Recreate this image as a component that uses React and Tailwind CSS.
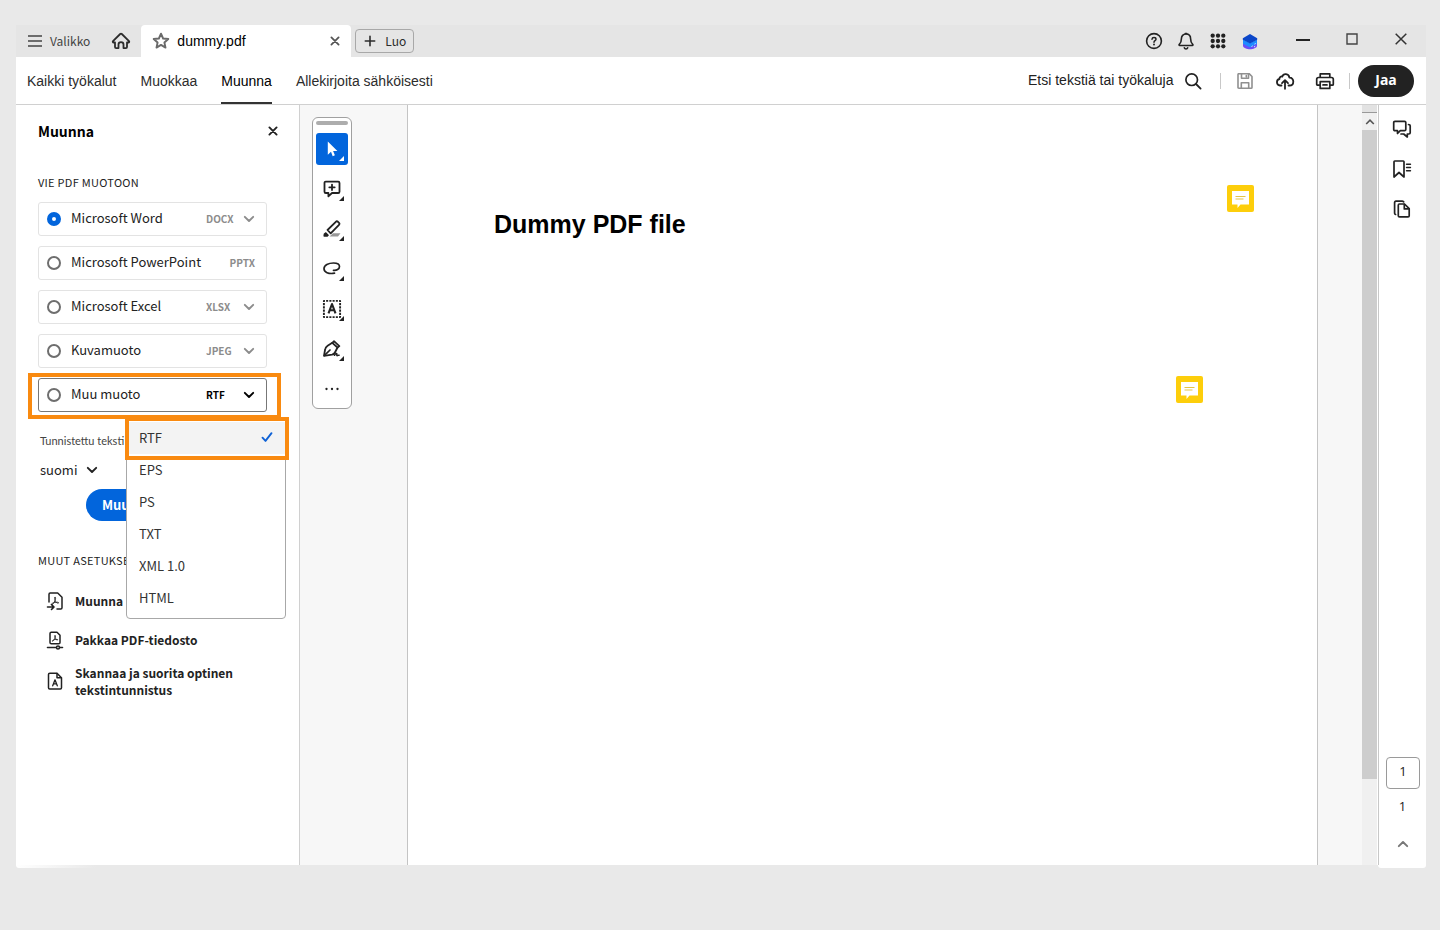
import React from "react";

function Icon({ className = "size-5", box = 20, children }) {
  return (
    <svg
      viewBox={`0 0 ${box} ${box}`}
      className={`shrink-0 ${className}`}
      fill="none"
      stroke="currentColor"
      strokeWidth="1.6"
      strokeLinecap="round"
      strokeLinejoin="round"
      aria-hidden="true"
    >
      {children}
    </svg>
  );
}

const Chevron = ({ className }) => (
  <Icon box={12} className={className}>
    <path d="M1.8 3.8 6 8l4.2-4.2" strokeWidth="1.9" />
  </Icon>
);

function IconButton({ label, className = "", children }) {
  return (
    <button type="button" aria-label={label} className={`flex items-center justify-center ${className}`}>
      {children}
    </button>
  );
}

function TitleBar() {
  return (
    <header className="flex h-8 items-stretch bg-[#e5e5e5] text-[#2c2c2c]">
      <button type="button" className="flex items-center gap-2 pl-3 text-[12px] leading-4 text-[#444]">
        <svg viewBox="0 0 14 12" className="h-3 w-[14px]" stroke="currentColor" strokeWidth="1.6" aria-hidden="true">
          <path d="M0 1h14M0 6h14M0 11h14" />
        </svg>
        Valikko
      </button>
      <IconButton label="Koti" className="ml-5 w-[22px]">
        <Icon>
          <path d="M2 10.2 9.2 3a1.2 1.2 0 0 1 1.6 0L18 10.2c.6.7.1 1.3-.6 1.3H16V16c0 .7-.4 1.1-1.1 1.1h-2.4v-3.6c0-1.5-1-2.4-2.5-2.4s-2.5.9-2.5 2.4v3.6H5.1C4.4 17.1 4 16.7 4 16v-4.5H2.6c-.7 0-1.2-.6-.6-1.3Z" strokeWidth="1.8" />
        </Icon>
      </IconButton>
      <div className="ml-[9px] flex w-[210px] items-center rounded-t bg-white px-[10px] text-black">
        <Icon className="size-5 text-[#6a6a6a]">
          <path d="m10 2.7 2.1 4.8 5.2.5-3.9 3.500 1.100 5.100-4.500-2.700-4.500 2.700 1.100-5.100L2.700 8l5.200-.5Z" strokeWidth="1.9" />
        </Icon>
        <span className="ml-[6px] flex-1 font-['Liberation_Sans',sans-serif] text-[14px] leading-5">dummy.pdf</span>
        <IconButton label="Sulje välilehti" className="size-3 text-[#555]">
          <Icon box={12} className="size-3">
            <path d="m2.4 2.4 7.200 7.200m0-7.200L2.400 9.600" strokeWidth="1.8" />
          </Icon>
        </IconButton>
      </div>
      <button type="button" className="ml-1 flex h-6 items-center gap-2 self-center rounded border border-[#a8a8a8] px-[7px] text-[12px] leading-4">
        <Icon box={14} className="size-[14px]">
          <path d="M7 2.300v9.400M2.300 7h9.400" />
        </Icon>
        Luo
      </button>

      <div className="ml-auto flex items-center text-[#222]">
        <IconButton label="Ohje" className="w-8">
          <Icon>
            <circle cx="10" cy="10" r="7.400" />
            <path d="M8 8.300c.1-1.200.9-1.800 2-1.800s2 .7 2 1.700c0 1.500-2 1.500-2 3" strokeWidth="1.5" />
            <circle cx="10" cy="13.500" r=".95" fill="currentColor" stroke="none" />
          </Icon>
        </IconButton>
        <IconButton label="Ilmoitukset" className="w-8">
          <Icon>
            <path d="M10 3c-2.900 0-4.600 2-4.600 4.700 0 3-.6 4.300-2.100 5.600-.5.500-.3 1.200.4 1.200h12.600c.7 0 .9-.7.4-1.200-1.500-1.300-2.100-2.600-2.100-5.600C14.600 5 12.900 3 10 3Z" />
            <path d="M8.300 16.800a1.800 1.800 0 0 0 3.400 0M9.300 2.500h1.400" />
          </Icon>
        </IconButton>
        <IconButton label="Sovellukset" className="w-8">
          <Icon>
            <g fill="currentColor" stroke="none">
              {[4.7, 10, 15.3].map((y) => [4.7, 10, 15.3].map((x) => <circle key={`${x}-${y}`} cx={x} cy={y} r="2.15" />))}
            </g>
          </Icon>
        </IconButton>
        <IconButton label="Tili" className="w-8">
          <svg viewBox="0 0 20 20" className="size-5" aria-hidden="true">
            <path d="m3 12 7 3.500 7-3.500v3c0 1.500-4 3.300-7 3.300s-7-1.800-7-3.300Z" fill="#6c4df6" />
            <path d="m3 8.500 7 3.500 7-3.500v4.300l-7 3.700-7-3.700Z" fill="#1e8bff" />
            <path d="m10 3 7.200 4.200v1.600L10 12.500 2.800 8.800V7.200Z" fill="#0b46c9" />
            <path d="m11.500 15.500 1.200-.6m1.300 1 1.200-.6m-.7-2.200 1.200-.6" stroke="#c9efff" />
          </svg>
        </IconButton>
        <IconButton label="Pienennä" className="ml-[21px] size-8">
          <svg viewBox="0 0 14 14" className="size-[14px]" aria-hidden="true">
            <path d="M0 6h14" stroke="currentColor" strokeWidth="2" />
          </svg>
        </IconButton>
        <IconButton label="Suurenna" className="ml-[17px] size-8 pb-1 text-[#444]">
          <svg viewBox="0 0 12 12" className="size-3" fill="none" stroke="currentColor" aria-hidden="true">
            <path d="M1 1h10v10H1Z" strokeWidth="1.4" />
          </svg>
        </IconButton>
        <IconButton label="Sulje" className="mr-[9px] ml-[17px] size-8 pb-1 text-[#333]">
          <svg viewBox="0 0 12 12" className="size-3" fill="none" stroke="currentColor" aria-hidden="true">
            <path d="m.7.7 10.600 10.600m0-10.600L.7 11.300" strokeWidth="1.5" />
          </svg>
        </IconButton>
      </div>
    </header>
  );
}

const tabs = ["Kaikki työkalut", "Muokkaa", "Muunna", "Allekirjoita sähköisesti"];

function Toolbar() {
  return (
    <div className="flex h-12 items-stretch border-b border-[#d0d0d0] font-['Liberation_Sans',sans-serif] text-[14px] leading-5 text-[#2c2c2c]">
      <nav className="flex gap-6 pl-[11px]">
        {tabs.map((tab) => (
          <a
            key={tab}
            href="#"
            aria-current={tab === "Muunna" ? "page" : undefined}
            className={`flex items-center border-b-2 pt-[2px] ${tab === "Muunna" ? "border-[#333] text-black" : "border-transparent"}`}
          >
            {tab}
          </a>
        ))}
      </nav>
      <div className="ml-auto flex items-center text-[#222]">
        <label className="flex items-center">
          <input
            type="text"
            aria-label="Etsi tekstiä tai työkaluja"
            placeholder="Etsi tekstiä tai työkaluja"
            className="w-[155px] pb-[2px] text-[14px] leading-5 outline-none placeholder:text-[#222]"
          />
          <Icon className="size-5">
            <circle cx="8.700" cy="8.700" r="5.800" strokeWidth="1.7" />
            <path d="m13 13 4.600 4.600" strokeWidth="1.8" />
          </Icon>
        </label>
        <span className="ml-[17px] h-4 w-px bg-[#c8c8c8]" />
        <IconButton label="Tallenna" className="ml-[14px] size-5 text-[#909090]">
          <Icon>
            <path d="M3.200 2.700h10.900l2.900 2.800v10.900c0 .5-.4.900-.9.900H3.900a.9.900 0 0 1-.9-.9V3.500c0-.5 0-.8.200-.8Z" />
            <path d="M6.500 3v4.300h7V3M6.300 17v-5.200h7.400V17M11.300 4.500v1.300" />
          </Icon>
        </IconButton>
        <IconButton label="Lataa pilveen" className="ml-5 size-5">
          <Icon>
            <path d="M6.500 14.500H5a3.300 3.300 0 0 1-.5-6.500C4.200 6.300 6 5 7.300 5.600 8.300 2.200 13.800 2.200 14.400 6.700c2.600-.1 3.900 1.700 3.900 3.700 0 2.300-1.500 4.100-3.800 4.100h-1" strokeWidth="1.8" />
            <path d="M10 17.800V9.500m-3 2.700 3-3 3 3" strokeWidth="1.8" />
          </Icon>
        </IconButton>
        <IconButton label="Tulosta" className="ml-5 size-5">
          <Icon>
            <path d="M5.200 6V2.800h9.600V6M5 14.200H2.700a1 1 0 0 1-1-1V8.300A1.800 1.800 0 0 1 3.500 6.500h13a1.800 1.800 0 0 1 1.800 1.800v4.900a1 1 0 0 1-1 1H15" strokeWidth="1.7" />
            <path d="M5.200 10.700h9.600v6.700H5.200Zm2.800 3.200h4" strokeWidth="1.7" />
          </Icon>
        </IconButton>
        <span className="ml-[14px] h-4 w-px bg-[#c8c8c8]" />
        <button
          type="button"
          className="mr-3 ml-2 h-8 w-14 rounded-full bg-[#222] pb-[2px] font-['Noto_Sans',sans-serif] text-[14px] font-bold text-white"
        >
          Jaa
        </button>
      </div>
    </div>
  );
}

const formats = [
  { id: "word", name: "Microsoft Word", tag: "DOCX", menu: true },
  { id: "ppt", name: "Microsoft PowerPoint", tag: "PPTX", menu: false },
  { id: "excel", name: "Microsoft Excel", tag: "XLSX", menu: true },
  { id: "image", name: "Kuvamuoto", tag: "JPEG", menu: true },
];

const radioBase = "size-[14px] shrink-0 appearance-none rounded-full bg-white outline-none";
const otherFormats = ["RTF", "EPS", "PS", "TXT", "XML 1.0", "HTML"];

function FormatRow({ format }) {
  const { id, name, tag, menu } = format;
  return (
    <li className="flex h-[34px] items-center rounded-[3px] border border-[#e3e3e3] pr-[11px] pl-2">
      <input
        type="radio"
        name="format"
        id={id}
        defaultChecked={id === "word"}
        className={`${radioBase} border-2 border-[#6e6e6e] checked:border-[5px] checked:border-[#0265dc]`}
      />
      <label htmlFor={id} className="flex-1 pb-[3px] pl-[10px]">
        {name}
      </label>
      {menu ? (
        <span className="relative flex text-[#8c8c8c]">
          <select
            aria-label={`${name}, tiedostomuoto`}
            className="w-[49px] appearance-none bg-transparent text-[10px] leading-4 font-bold outline-none"
          >
            <option>{tag}</option>
          </select>
          <Chevron className="pointer-events-none absolute top-[2px] right-0 size-3" />
        </span>
      ) : (
        <span className="text-[10px] leading-4 font-bold text-[#8c8c8c]">{tag}</span>
      )}
    </li>
  );
}

function OtherFormatRow() {
  return (
    <li className="relative flex h-[34px] items-center rounded-[3px] border border-[#777] pr-[11px] pl-2">
      <input type="radio" name="format" id="other" className={`${radioBase} border-2 border-[#6e6e6e] checked:border-[5px] checked:border-[#0265dc]`} />
      <label htmlFor="other" className="flex-1 pb-[3px] pl-[10px]">
        Muu muoto
      </label>
      <button
        type="button"
        aria-haspopup="listbox"
        aria-expanded="true"
        className="flex w-[49px] items-center justify-between text-[10px] leading-4 font-bold text-black"
      >
        RTF
        <Chevron className="size-3" />
      </button>
      <span className="pointer-events-none absolute -top-[6px] -right-[15px] -bottom-2 -left-[11px] border-4 border-[#f98a10]" />
      <ul
        role="listbox"
        aria-label="Muu muoto"
        className="absolute top-[38px] left-[87px] z-10 w-40 rounded border border-[#a8a8a8] bg-white py-1 text-[#333]"
      >
        {otherFormats.map((name, i) => (
          <li
            key={name}
            role="option"
            aria-selected={i === 0}
            className={`flex h-8 items-center justify-between px-3 pb-[2px] ${i === 0 ? "bg-[#f3f3f3]" : ""}`}
          >
            {name}
            {i === 0 && (
              <Icon box={12} className="size-3 text-[#0f62d6]">
                <path d="m1.500 6.700 3 3.200 6-7.700" strokeWidth="1.9" />
              </Icon>
            )}
          </li>
        ))}
        <li role="presentation" className="pointer-events-none absolute -top-px -right-1 -left-[2px] h-[43px] border-4 border-[#f98a10]" />
      </ul>
    </li>
  );
}

const pdfMark = "M10 6.500c.9 0 .7 1.500 0 3.100-.8 1.900-2.200 4-3.200 4.200-1 0-.3-1.300 1.500-1.900 1.800-.7 4.400-1 5.200-.3.500.8-1.100.8-2.300-.3-1.300-1.200-2.200-4.700-1.200-4.800Z";

const actions = [
  {
    label: "Muunna",
    icon: (
      <>
        <path d="M4 11V3.200c0-.8.500-1.200 1.200-1.200h7.500L17 6.300v10.500c0 .7-.5 1.200-1.200 1.200H12" strokeWidth="1.5" />
        <path d={pdfMark} strokeWidth=".9" />
        <path d="M2.500 16h6.300M6.500 13.500 9 16l-2.500 2.500" />
      </>
    ),
  },
  {
    label: "Pakkaa PDF-tiedosto",
    icon: (
      <>
        <path d="M5 12.500v-9c0-.8.500-1.300 1.300-1.300h5.700L15 5.200v7.300c0 .8-.5 1.300-1.300 1.300H6.300c-.8 0-1.300-.5-1.300-1.300Z" strokeWidth="1.5" />
        <g transform="translate(2.400 .8) scale(.76)">
          <path d={pdfMark} strokeWidth="1.1" />
        </g>
        <path d="M2.500 17.500h8.800m3.400 0h2.800" />
        <circle cx="13" cy="17.500" r="1.500" />
      </>
    ),
  },
  {
    label: "Skannaa ja suorita optinen tekstintunnistus",
    icon: (
      <>
        <path d="M3.500 16.800V3.500c0-.8.500-1.300 1.300-1.300h7.200l4.500 4.500v10.100c0 .7-.5 1.200-1.200 1.200H4.700c-.7 0-1.200-.5-1.200-1.200Z" strokeWidth="1.5" />
        <path d="M12 2.500v4.200h4.200" strokeWidth="1.5" />
        <path d="m7.700 14.800 2.300-6 2.300 6m-3.900-2h3.200" strokeWidth="1.3" />
      </>
    ),
  },
];

function Sidebar() {
  return (
    <aside className="w-[284px] shrink-0 border-r border-[#d0d0d0] pt-4 pr-8 pl-[22px] text-[13px] leading-[17px] text-[#222]">
      <div className="flex h-5 items-center justify-between">
        <h2 className="text-[14px] font-bold text-black">Muunna</h2>
        <IconButton label="Sulje paneeli" className="-mr-3 size-3">
          <Icon box={12} className="size-3">
            <path d="m2.400 2.400 7.200 7.200m0-7.200L2.400 9.600" strokeWidth="1.9" />
          </Icon>
        </IconButton>
      </div>
      <h3 className="mt-[33px] text-[11px] leading-4 tracking-wide">VIE PDF MUOTOON</h3>
      <ul className="mt-3 flex flex-col gap-[10px]">
        {formats.map((format) => (
          <FormatRow key={format.id} format={format} />
        ))}
        <OtherFormatRow />
      </ul>
      <label htmlFor="language" className="mt-[21px] ml-[2px] block font-['Lato',sans-serif] text-[11px] leading-4 text-[#444]">
        Tunnistettu teksti
      </label>
      <div className="relative mt-3 ml-[2px] flex w-[58px]">
        <select id="language" className="w-full appearance-none bg-transparent leading-[17px] outline-none">
          <option>suomi</option>
        </select>
        <Chevron className="pointer-events-none absolute top-[3px] right-0 size-3" />
      </div>
      <button type="button" className="mt-[11px] ml-12 h-8 w-[132px] rounded-full bg-[#0265dc] pb-[2px] pl-4 text-left font-bold text-white">
        Muunna
      </button>
      <h3 className="mt-[31px] text-[11px] leading-4 tracking-wide">MUUT ASETUKSET</h3>
      <ul className="mt-[13px] text-[12px] font-bold">
        {actions.map(({ label, icon }) => (
          <li key={label}>
            <a href="#" className="flex min-h-[39px] items-center gap-[10px] py-[5px] pl-[7px]">
              <Icon>{icon}</Icon>
              <span>{label}</span>
            </a>
          </li>
        ))}
      </ul>
    </aside>
  );
}

const tools = [
  {
    label: "Kommentti",
    icon: (
      <>
        <path d="M3.800 2.600h12.400c.8 0 1.300.5 1.300 1.300v8.800c0 .8-.5 1.300-1.300 1.300H10l-3.600 3.300V14H3.800c-.8 0-1.300-.5-1.300-1.300V3.900c0-.8.500-1.300 1.300-1.300Z" strokeWidth="1.8" />
        <path d="M10 5.600v5.400M7.300 8.300h5.400" strokeWidth="1.8" />
      </>
    ),
  },
  {
    label: "Korostus",
    icon: (
      <>
        <path d="m7.500 17.500 3.500-3.300h7.500l-2.500 3.300Z" fill="#999" stroke="none" />
        <path d="m5.500 11 8.300-8.200c.7-.7 1.500-.6 2.200 0l1 1c.7.700.700 1.400 0 2.100l-8.300 8.500Z" strokeWidth="1.8" />
        <path d="M3.800 14 6 16.200l-.8.800H2.200c-.2-1.300.4-2.400 1.600-3Z" fill="currentColor" />
      </>
    ),
  },
  {
    label: "Piirrä",
    icon: <path d="M11.500 11.300c3 .3 6-1 6-3.800C17.500 5 15 4 11.500 4 6.500 4 2 6.300 2 9.800c0 3.500 4.500 5.400 10.500 4.400" strokeWidth="1.7" />,
  },
  {
    label: "Lisää teksti",
    icon: (
      <>
        <path d="M1.900 1.900h16.200v16.200H1.900Z" strokeWidth="1.900" strokeDasharray="2.050 1.190" strokeDashoffset="1.020" strokeLinecap="butt" />
        <path d="m6.500 14.300 3.500-9.300 3.500 9.300m-5.700-3.100h4.400" strokeWidth="2.100" strokeLinecap="butt" />
      </>
    ),
  },
  {
    label: "Allekirjoita",
    icon: (
      <>
        <path d="m2 16.800 1-5.800c.3-2.200 1-3.300 2.600-4.300l4.700-2.900 5.200 4.700-2.300 4.500c-.7 1.500-1.500 2.300-3.200 2.700Z" strokeWidth="1.8" />
        <path d="m10.300 3.800 1.700-1.600 5.400 4.900-1.900 1.500M2.500 16.300 8 11" strokeWidth="1.7" />
        <path d="M12.500 16.300c1-1.800 2-2.300 2.300-1.500.2.700-.5 1.700.3 1.900.8 0 1-.6 2-.5" strokeWidth="1.5" />
      </>
    ),
  },
];

function Corner({ className }) {
  return (
    <svg viewBox="0 0 5 5" className={`absolute size-[5px] ${className}`} aria-hidden="true">
      <path d="M5 0v5H0Z" fill="currentColor" />
    </svg>
  );
}

function ToolPalette() {
  return (
    <div
      role="toolbar"
      aria-label="Työkalut"
      className="mt-3 ml-3 flex w-10 shrink-0 flex-col items-center self-start rounded-md border border-[#a0a0a0] bg-white py-[3px] text-[#222]"
    >
      <span className="mb-2 h-1 w-8 rounded-full bg-[#adadad]" />
      <IconButton label="Valitse" className="relative mb-1 size-8 rounded-[3px] bg-[#0265dc] text-white">
        <Icon className="size-5">
          <path d="M5.800 2.500v13.300l3.200-3 1.700 4.400 2.200-.9-1.800-4.200 4.300-.2Z" fill="currentColor" stroke="none" />
        </Icon>
        <Corner className="right-1 bottom-1" />
      </IconButton>
      {tools.map(({ label, icon }) => (
        <IconButton key={label} label={label} className="relative mb-1 h-9 w-8 pt-1">
          <Icon>{icon}</Icon>
          <Corner className="right-1 bottom-1" />
        </IconButton>
      ))}
      <IconButton label="Lisää työkaluja" className="h-9 w-8 pt-[3px]">
        <Icon>
          <g fill="currentColor" stroke="none">
            <circle cx="4.500" cy="10" r="1.150" />
            <circle cx="10" cy="10" r="1.150" />
            <circle cx="15.500" cy="10" r="1.150" />
          </g>
        </Icon>
      </IconButton>
    </div>
  );
}

function Note({ className }) {
  return (
    <button type="button" aria-label="Muistilappu" className={`absolute ${className}`}>
      <svg viewBox="0 0 27 27" className="size-[27px]" aria-hidden="true">
        <rect width="27" height="27" rx="2" fill="#fdce0b" />
        <path d="M5 6h17v13.500h-8.500L10.500 23v-3.500H5Z" fill="#fff" />
        <path d="M8.500 11.500h10M8.500 14h8" stroke="#e5c545" strokeWidth="1.2" />
      </svg>
    </button>
  );
}

function DocumentArea() {
  return (
    <main className="flex min-w-0 flex-1 bg-[#f7f7f7]">
      <ToolPalette />
      <article className="relative mr-11 ml-[55px] flex-1 border-x border-[#c4c4c4] bg-white pt-[103px] pl-[86px]">
        <h1 className="font-['Liberation_Sans',sans-serif] text-[25px] leading-8 font-bold text-black">Dummy PDF file</h1>
        <Note className="top-20 right-[63px]" />
        <Note className="top-[271px] right-[114px]" />
      </article>
      <div className="flex w-[15px] shrink-0 flex-col bg-[#f0f0f0]">
        <span className="h-2 border-b border-[#999] bg-[#e2e2e2]" />
        <IconButton label="Vieritä ylös" className="h-[17px] text-[#555]">
          <Icon box={10} className="size-[10px]">
            <path d="m1.200 7 3.800-3.800L8.800 7" strokeLinecap="butt" strokeLinejoin="miter" />
          </Icon>
        </IconButton>
        <span className="flex-[649] bg-[#cdcdcd]" />
        <span className="flex-[86]" />
      </div>
    </main>
  );
}

function Rail() {
  return (
    <aside className="ml-px flex w-12 shrink-0 flex-col items-center border-l border-[#c8c8c8] pt-[14px] font-['Open_Sans',sans-serif] text-[13px] leading-4 text-[#222]">
      <div className="mr-[2px] flex flex-col gap-5">
        <IconButton label="Kommentit">
          <Icon>
            <path d="M3 2.300h9.500c.8 0 1.300.5 1.300 1.300v6.800c0 .8-.5 1.300-1.300 1.300H8.300L5.500 14.500v-2.800H3c-.8 0-1.300-.5-1.300-1.300V3.600c0-.8.500-1.300 1.300-1.300Z" strokeWidth="1.7" />
            <path d="M16.500 5.500c1 0 1.700.5 1.700 1.300v7c0 .8-.5 1.200-1.300 1.200h-1.600v3l-3.600-3H9" strokeWidth="1.7" />
          </Icon>
        </IconButton>
        <IconButton label="Kirjanmerkit">
          <Icon>
            <path d="M2.800 2h8.400c.6 0 .8.300.8.800v15.200l-5-4.500L2 18V2.800c0-.5.200-.8.800-.8Z" strokeWidth="1.7" />
            <path d="M14.500 5.300h4M14.500 8.500h4M14.500 11.700h4" strokeWidth="1.4" />
          </Icon>
        </IconButton>
        <IconButton label="Sivut">
          <Icon>
            <path d="M7.300 5h5.200l4.700 4.700v7c0 .7-.5 1.200-1.200 1.200H7.500c-.7 0-1.200-.5-1.200-1.200V6.200C6.300 5.500 6.700 5 7.300 5Z" strokeWidth="1.7" />
            <path d="M12.300 5.300v4.600h4.600M3.600 15.500c-.7-.2-1-.6-1-1.300V3.500c0-.8.500-1.300 1.300-1.300h6.300c.7 0 1 .2 1.500.7" strokeWidth="1.7" />
          </Icon>
        </IconButton>
      </div>
      <input
        aria-label="Sivunumero"
        defaultValue="1"
        className="mt-auto ml-px h-8 w-[34px] rounded border border-[#9a9a9a] pb-1 text-center outline-none"
      />
      <span className="mt-[9px]">1</span>
      <IconButton label="Edellinen sivu" className="mt-6 mb-[15px] text-[#777]">
        <Chevron className="size-3 rotate-180" />
      </IconButton>
    </aside>
  );
}

export default function App() {
  return (
    <div className="flex min-h-screen flex-col bg-[#e9e9e9] pt-[25px] pr-[14px] pb-[62px] pl-4 font-['Noto_Sans_CJK_SC',sans-serif]">
      <div className="flex flex-1 flex-col bg-white">
        <TitleBar />
        <Toolbar />
        <div className="flex flex-1">
          <Sidebar />
          <DocumentArea />
          <Rail />
        </div>
      </div>
      <div className="flex h-[3px] items-end justify-between">
        <span className="h-full w-20 rounded-bl bg-gradient-to-r from-white to-[#e9e9e9]" />
        <span className="h-full w-12 rounded-b bg-white" />
      </div>
    </div>
  );
}
